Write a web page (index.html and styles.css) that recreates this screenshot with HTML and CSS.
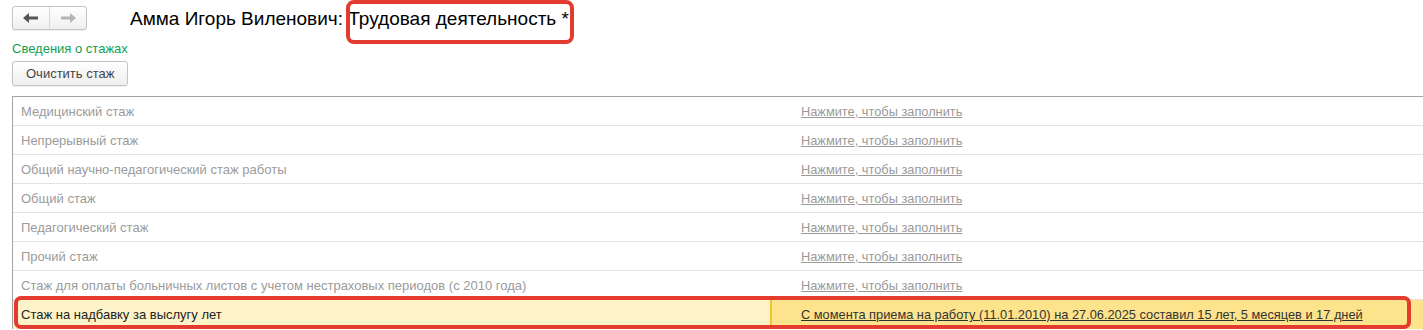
FILE: index.html
```html
<!DOCTYPE html>
<html>
<head>
    <meta charset="utf-8">
    <title>Трудовая деятельность</title>
    <link rel="stylesheet" href="styles.css">
</head>
<body>
<div class="header">
    <div class="nav">
        <span class="nav-btn">
            <svg width="16" height="10" viewBox="0 0 16 10"><path d="M0 5 L6 0 L6 3.5 L15 3.5 L15 6.5 L6 6.5 L6 10 Z" fill="#555"/></svg>
        </span>
        <span class="nav-btn">
            <svg width="16" height="10" viewBox="0 0 16 10"><path d="M16 5 L10 0 L10 3.5 L1 3.5 L1 6.5 L10 6.5 L10 10 Z" fill="#b4b4b4"/></svg>
        </span>
    </div>
    <h1 class="title">Амма Игорь Виленович: <span class="mark">Трудовая деятельность *</span></h1>
</div>
<div class="group-title">Сведения о стажах</div>
<div class="toolbar">
    <button class="btn">Очистить стаж</button>
</div>
<div class="grid">
    <div class="row"><div class="name">Медицинский стаж</div><div class="value"><a>Нажмите, чтобы заполнить</a></div></div>
    <div class="row"><div class="name">Непрерывный стаж</div><div class="value"><a>Нажмите, чтобы заполнить</a></div></div>
    <div class="row"><div class="name">Общий научно-педагогический стаж работы</div><div class="value"><a>Нажмите, чтобы заполнить</a></div></div>
    <div class="row"><div class="name">Общий стаж</div><div class="value"><a>Нажмите, чтобы заполнить</a></div></div>
    <div class="row"><div class="name">Педагогический стаж</div><div class="value"><a>Нажмите, чтобы заполнить</a></div></div>
    <div class="row"><div class="name">Прочий стаж</div><div class="value"><a>Нажмите, чтобы заполнить</a></div></div>
    <div class="row"><div class="name">Стаж для оплаты больничных листов с учетом нестраховых периодов (с 2010 года)</div><div class="value"><a>Нажмите, чтобы заполнить</a></div></div>
    <div class="row current"><div class="name">Стаж на надбавку за выслугу лет</div><div class="value"><a>С момента приема на работу (11.01.2010) на 27.06.2025 составил 15 лет, 5 месяцев и 17 дней</a></div></div>
</div>
</body>
</html>
```

FILE: styles.css
```css
body {
    margin: 0;
    font-family: "Liberation Sans", Arial, sans-serif;
    font-size: 13px;
    color: #333;
    background: #fff;
    overflow: hidden;
}

.header {
    display: flex;
    align-items: flex-start;
    padding: 6px 0 0 12px;
    height: 35px;
}

.nav {
    display: flex;
    height: 22px;
    border: 1px solid #c4c4c4;
    border-radius: 3px;
    background: linear-gradient(#fff, #f0f0f0);
    box-shadow: 0 1px 1px #0001;
}

.nav-btn {
    width: 36px;
    display: flex;
    align-items: center;
    justify-content: center;
}

.nav-btn + .nav-btn {
    border-left: 1px solid #d8d8d8;
}

.title {
    margin: 2px 0 0 43px;
    font-size: 19px;
    font-weight: normal;
    color: #000;
    line-height: 22px;
}

.mark {
    position: relative;
}

.mark::after {
    content: '';
    position: absolute;
    left: -2px;
    right: -5px;
    top: -8px;
    bottom: -15px;
    border: 4px solid #e33b2e;
    border-radius: 8px;
}

.group-title {
    padding-left: 12px;
    color: #12a150;
    line-height: 16px;
}

.toolbar {
    padding: 4px 0 0 12px;
    height: 30px;
}

.btn {
    font: inherit;
    color: #444;
    height: 25px;
    padding: 0 13px;
    border: 1px solid #c4c4c4;
    border-radius: 3px;
    background: linear-gradient(#fff, #efefef);
    box-shadow: 0 1px 1px #0001;
}

.grid {
    margin: 5px 0 0 12px;
    border-top: 1px solid #a4a4a4;
    border-left: 1px solid #a4a4a4;
}

.row {
    display: grid;
    grid-template-columns: 757px 1fr;
    height: 28px;
    border-bottom: 1px solid #e2e2e2;
}

.name {
    padding-left: 8px;
    line-height: 29px;
    color: #9b9b9b;
    white-space: nowrap;
}

.value {
    padding-left: 31px;
    line-height: 29px;
    white-space: nowrap;
}

.value a {
    color: #9a9a9a;
    font-size: 12.8px;
    text-decoration: underline;
}

.row.current {
    position: relative;
    border-bottom-color: #f5c22c;
}

.row.current .name {
    background: #fdf3c9;
    color: #222;
}

.row.current .value {
    background: #fde38b;
    border-left: 2px solid #f5c22c;
    padding-left: 29px;
}

.row.current .value a {
    color: #333;
}

.row.current::after {
    content: '';
    position: absolute;
    left: 1px;
    width: 1397px;
    top: -4px;
    bottom: -1px;
    border: 4px solid #e33b2e;
    border-radius: 7px;
    box-sizing: border-box;
}
```
